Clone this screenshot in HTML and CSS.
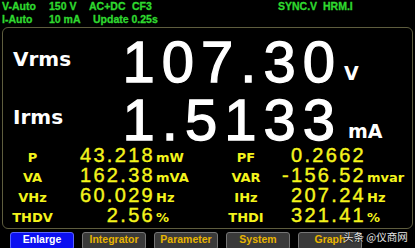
FILE: index.html
```html
<!DOCTYPE html>
<html>
<head>
<meta charset="utf-8">
<link rel="stylesheet" href="styles.css">
</head>
<body>
<div class="screen">
  <div class="status">
    <div class="srow">
      <span class="s-a">V-Auto</span><span class="s-b">150 V</span><span class="s-c">AC+DC</span><span class="s-d">CF3</span><span class="s-e">SYNC.V</span><span>HRM.I</span>
    </div>
    <div class="srow">
      <span class="s-a">I-Auto</span><span class="s-b2">10 mA</span><span>Update 0.25s</span>
    </div>
  </div>
  <div class="panel">
    <div class="big">
      <div class="blabel">Vrms</div><div class="bval">107.30</div><div class="bunit">V</div>
      <div class="blabel">Irms</div><div class="bval">1.5133</div><div class="bunit bunit-ma">mA</div>
    </div>
    <div class="small">
      <div class="slabel">P</div><div class="sval">43.218</div><div class="sunit">mW</div>
      <div class="slabel">PF</div><div class="sval">0.2662</div><div class="sunit"></div>

      <div class="slabel">VA</div><div class="sval">162.38</div><div class="sunit">mVA</div>
      <div class="slabel">VAR</div><div class="sval">-156.52</div><div class="sunit">mvar</div>

      <div class="slabel">VHz</div><div class="sval">60.029</div><div class="sunit">Hz</div>
      <div class="slabel">IHz</div><div class="sval">207.24</div><div class="sunit">Hz</div>

      <div class="slabel">THDV</div><div class="sval">2.56</div><div class="sunit">%</div>
      <div class="slabel">THDI</div><div class="sval">321.41</div><div class="sunit">%</div>
    </div>
  </div>
  <div class="keys">
    <div class="key key-active">Enlarge</div>
    <div class="key">Integrator</div>
    <div class="key">Parameter</div>
    <div class="key">System</div>
    <div class="key">Graph</div>
  </div>
  <div class="watermark">头条 @仪商网</div>
</div>
</body>
</html>
```

FILE: styles.css
```css
html, body {
  margin: 0;
  padding: 0;
  background: #000;
}

.screen {
  position: relative;
  width: 415px;
  height: 248px;
  overflow: hidden;
  background: #000;
}

.status {
  color: #2fd82f;
  font-family: "Liberation Sans", Arial, sans-serif;
  font-weight: bold;
  font-size: 10.5px;
  line-height: 13px;
  padding-left: 2px;
  -webkit-text-stroke: 0.3px #2fd82f;
}

.srow {
  display: flex;
  height: 13px;
  white-space: nowrap;
}

.s-a { width: 47px; }
.s-b { width: 40px; }
.s-b2 { width: 44px; }
.s-c { width: 43px; }
.s-d { width: 146px; }
.s-e { width: 45px; }

.panel {
  box-sizing: border-box;
  margin: 1px 2px 0 2px;
  height: 202px;
  border: 1px solid #5e5d3e;
  border-radius: 6px;
  padding-top: 8px;
}

.big {
  display: grid;
  grid-template-columns: 117px 222px auto;
  grid-auto-rows: 52px;
  row-gap: 6px;
  align-items: start;
}

.blabel {
  color: #fff;
  font-family: "DejaVu Sans", Verdana, sans-serif;
  font-weight: bold;
  font-size: 20px;
  line-height: 24px;
  padding-top: 11px;
  padding-left: 10px;
}

.bval {
  color: #fff;
  font-family: "Liberation Sans", Arial, sans-serif;
  font-weight: normal;
  font-size: 58px;
  line-height: 52px;
  letter-spacing: 7px;
  text-align: right;
  -webkit-text-stroke: 1.3px #fff;
}

.bunit {
  color: #fff;
  font-family: "DejaVu Sans", Verdana, sans-serif;
  font-weight: bold;
  font-size: 19px;
  line-height: 22px;
  padding-top: 26px;
  padding-left: 2px;
}

.bunit-ma {
  padding-left: 6px;
}

.small {
  margin-top: -1px;
  display: grid;
  grid-template-columns: 59px 93px 71px 40px 100px auto;
  grid-auto-rows: 20px;
  align-items: baseline;
  color: #f4f41c;
}

.slabel {
  font-family: "DejaVu Sans", Verdana, sans-serif;
  font-weight: bold;
  font-size: 13px;
  line-height: 16px;
  text-align: center;
  white-space: nowrap;
}

.sval {
  font-family: "Liberation Sans", Arial, sans-serif;
  font-size: 20px;
  line-height: 20px;
  letter-spacing: 2.3px;
  text-align: right;
  -webkit-text-stroke: 0.4px #f4f41c;
}

.sunit {
  font-family: "DejaVu Sans", Verdana, sans-serif;
  font-weight: bold;
  font-size: 13px;
  line-height: 16px;
  padding-left: 1px;
}

.keys {
  display: flex;
  gap: 8px;
  margin-top: 3px;
  padding-left: 10px;
}

.key {
  box-sizing: border-box;
  width: 64px;
  height: 18px;
  border: 1px solid #767676;
  border-radius: 3px;
  background: #3a3a3a;
  color: #e8b400;
  font-family: "Liberation Sans", Arial, sans-serif;
  font-weight: bold;
  font-size: 10.5px;
  line-height: 12px;
  text-align: center;
}

.key-active {
  background: #0c10f0;
  border-color: #5a64ff;
  color: #fff;
}

.watermark {
  position: absolute;
  left: 343px;
  top: 230px;
  color: #e6e6e6;
  font-family: "Noto Sans CJK SC", sans-serif;
  font-size: 10.5px;
  line-height: 13px;
  text-shadow: 0 0 2px #000, 0 0 1px #000;
  white-space: nowrap;
}
```
